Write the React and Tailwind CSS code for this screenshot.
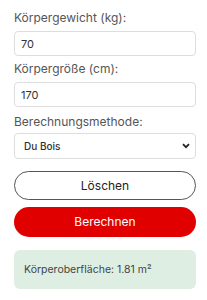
import React, { useState } from 'react';

const App = () => {
  const [weight, setWeight] = useState('70');
  const [height, setHeight] = useState('170');
  const [method, setMethod] = useState('dubois');

  return (
    <div className="w-[207px] h-[300px] bg-white pl-[14px] pr-[11px] pt-[10px] font-['Inter',sans-serif]">
      <label className="block text-[12px] leading-[16px] text-[#555]">Körpergewicht (kg):</label>
      <input
        className="mt-[5px] block w-full h-[25px] rounded-[4px] border border-[#ddd] px-[6px] text-[11px] text-[#333] outline-none"
        value={weight}
        onChange={e => setWeight(e.target.value)}
      />
      <label className="mt-[5px] block text-[12px] leading-[16px] text-[#555]">Körpergröße (cm):</label>
      <input
        className="mt-[5px] block w-full h-[25px] rounded-[4px] border border-[#ddd] px-[6px] text-[11px] text-[#333] outline-none"
        value={height}
        onChange={e => setHeight(e.target.value)}
      />
      <label className="mt-[7px] block text-[12px] leading-[16px] text-[#555]">Berechnungsmethode:</label>
      <div className="relative mt-[3px]">
        <select
          className="block w-full h-[26px] appearance-none rounded-[4px] border border-[#ddd] bg-white px-[9px] text-[10px] font-medium text-[#333] outline-none"
          value={method}
          onChange={e => setMethod(e.target.value)}
        >
          <option value="dubois">Du Bois</option>
          <option value="mosteller">Mosteller</option>
        </select>
        <svg className="pointer-events-none absolute right-[6px] top-[10px]" width="8" height="6" viewBox="0 0 8 6">
          <path d="M1 1.2 L4 4.2 L7 1.2" fill="none" stroke="#222" strokeWidth="1.8" />
        </svg>
      </div>
      <button className="mt-[12px] block w-full h-[29px] rounded-full border border-[#555] bg-white text-[12px] text-[#222]">
        Löschen
      </button>
      <button className="mt-[7px] block w-full h-[30px] rounded-full bg-[#e00000] text-[12px] text-white">
        Berechnen
      </button>
      <div className="mt-[13px] h-[39px] rounded-[6px] bg-[#deeee3] px-[10px] flex items-center text-[10.5px] text-[#444]">
        Körperoberfläche: 1.81 m²
      </div>
    </div>
  );
};

export default App;
